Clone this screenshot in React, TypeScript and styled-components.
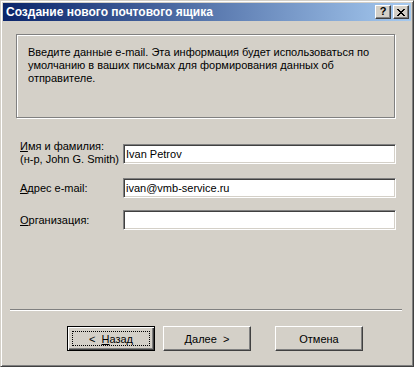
import React from "react";
import styled, { createGlobalStyle } from "styled-components";

const GlobalStyle = createGlobalStyle`
    html, body {
        margin: 0;
        padding: 0;
        background: #d4d0c8;
    }
    * {
        box-sizing: border-box;
    }
`;

const face = "#d4d0c8";
const shadow = "#808080";
const darkShadow = "#404040";

export default function App() {
    return (
        <>
            <GlobalStyle />
            <Window>
                <TitleBar>
                    <TitleText>Создание нового почтового ящика</TitleText>
                    <TitleButtons>
                        <CaptionButton>
                            <HelpGlyph>?</HelpGlyph>
                        </CaptionButton>
                        <CaptionButton>
                            <svg width="8" height="7" viewBox="0 0 8 7">
                                <path d="M0 0h2v1h1v1h2V1h1V0h2v1H7v1H6v1H5v1h1v1h1v1h1v1H6V6H5V5H3v1H2v1H0V6h1V5h1V4h1V3H2V2H1V1H0z" fill="#000" />
                            </svg>
                        </CaptionButton>
                    </TitleButtons>
                </TitleBar>
                <Body>
                    <InfoSection>
                        <InfoPanel>
                            Введите данные e-mail. Эта информация будет использоваться по
                            <br />
                            умолчанию в ваших письмах для формирования данных об
                            <br />
                            отправителе.
                        </InfoPanel>
                    </InfoSection>
                    <Form>
                        <Label $top>
                            <u>И</u>мя и фамилия:
                            <br />
                            (н-р, John G. Smith)
                        </Label>
                        <Field defaultValue="Ivan Petrov" />
                        <Label>
                            <u>А</u>дрес e-mail:
                        </Label>
                        <Field defaultValue="ivan@vmb-service.ru" />
                        <Label>
                            <u>О</u>рганизация:
                        </Label>
                        <Field defaultValue="" />
                    </Form>
                    <Spacer />
                    <Separator />
                    <ButtonRow>
                        <Button $default>
                            <FocusRect>
                                &lt;&nbsp;&nbsp;<u>Н</u>азад
                            </FocusRect>
                        </Button>
                        <Button>
                            <u>Д</u>алее&nbsp;&nbsp;&gt;
                        </Button>
                        <CancelButton>Отмена</CancelButton>
                    </ButtonRow>
                </Body>
            </Window>
        </>
    );
}

const Window = styled.div`
    width: 414px;
    height: 367px;
    display: flex;
    flex-direction: column;
    background: ${face};
    border: 1px solid;
    border-color: ${face} ${darkShadow} ${darkShadow} ${face};
    box-shadow: inset 1px 1px 0 #fff, inset -1px -1px 0 ${shadow};
    padding: 2px;
    font-family: "Liberation Sans", Arial, sans-serif;
    font-size: 11px;
    color: #000;
`;

const TitleBar = styled.div`
    height: 18px;
    display: flex;
    align-items: center;
    justify-content: space-between;
    background: linear-gradient(to right, #0a246a, #a6caf0);
    padding: 0 2px 0 3px;
`;

const TitleText = styled.div`
    color: #fff;
    font-weight: bold;
    font-size: 12px;
    white-space: nowrap;
`;

const TitleButtons = styled.div`
    display: flex;
    gap: 2px;
`;

const CaptionButton = styled.div`
    width: 16px;
    height: 14px;
    display: flex;
    align-items: center;
    justify-content: center;
    background: ${face};
    border: 1px solid;
    border-color: #fff ${darkShadow} ${darkShadow} #fff;
    box-shadow: inset -1px -1px 0 ${shadow};
`;

const HelpGlyph = styled.span`
    font-weight: bold;
    font-size: 11px;
    line-height: 11px;
    margin-top: -1px;
`;

const Body = styled.div`
    flex: 1;
    display: flex;
    flex-direction: column;
`;

const InfoSection = styled.div`
    padding: 13px 16px 0 13px;
`;

const InfoPanel = styled.div`
    height: 84px;
    border: 1px solid ${shadow};
    box-shadow: 1px 1px 0 #fff, inset 1px 1px 0 #fff;
    padding: 11px 4px 0 11px;
    line-height: 13px;
    white-space: nowrap;
`;

const Form = styled.div`
    display: grid;
    grid-template-columns: 103px 1fr;
    row-gap: 12px;
    align-items: center;
    padding: 24px 15px 0 17px;
`;

const Label = styled.div<{ $top?: boolean }>`
    line-height: 13px;
    white-space: nowrap;
    align-self: ${(props) => (props.$top ? "start" : "center")};
    margin-top: ${(props) => (props.$top ? "-2px" : "0")};
`;

const Field = styled.input`
    height: 20px;
    width: 100%;
    border: 1px solid;
    border-color: ${shadow} #fff #fff ${shadow};
    box-shadow: inset 1px 1px 0 ${darkShadow}, inset -1px -1px 0 ${face};
    background: #fff;
    padding: 0 2px;
    font-family: "Liberation Sans", Arial, sans-serif;
    font-size: 11px;
    color: #000;
    outline: none;
`;

const Spacer = styled.div`
    flex: 1;
`;

const Separator = styled.div`
    margin: 0 9px 0 7px;
    height: 2px;
    border-top: 1px solid ${shadow};
    border-bottom: 1px solid #fff;
`;

const ButtonRow = styled.div`
    display: flex;
    justify-content: flex-end;
    gap: 8px;
    padding: 15px 48px 13px 0;
`;

const Button = styled.div<{ $default?: boolean }>`
    width: 88px;
    height: 25px;
    display: flex;
    align-items: center;
    justify-content: center;
    background: ${face};
    border: 1px solid;
    border-color: ${(props) => (props.$default ? "#000" : `#fff ${darkShadow} ${darkShadow} #fff`)};
    box-shadow: ${(props) =>
        props.$default
            ? `inset 1px 1px 0 #fff, inset -1px -1px 0 ${darkShadow}, inset -2px -2px 0 ${shadow}`
            : `inset -1px -1px 0 ${shadow}`};
    white-space: nowrap;
`;

const CancelButton = styled(Button)`
    margin-left: 16px;
`;

const FocusRect = styled.div`
    width: 78px;
    height: 15px;
    display: flex;
    align-items: center;
    justify-content: center;
    border: 1px dotted #000;
`;
